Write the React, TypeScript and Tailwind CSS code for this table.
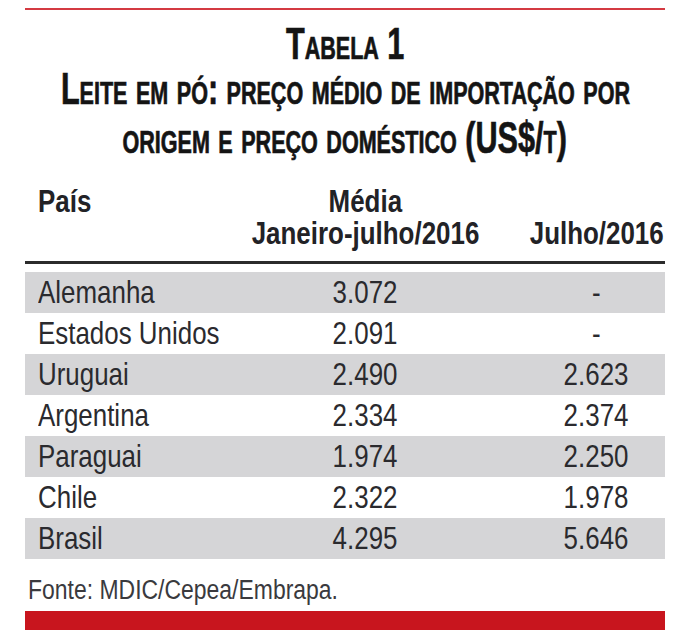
import type { ReactNode } from 'react';

const rows: [string, string, string][] = [
  ['Alemanha', '3.072', '-'],
  ['Estados Unidos', '2.091', '-'],
  ['Uruguai', '2.490', '2.623'],
  ['Argentina', '2.334', '2.374'],
  ['Paraguai', '1.974', '2.250'],
  ['Chile', '2.322', '1.978'],
  ['Brasil', '4.295', '5.646'],
];

// No narrow face is installed, so the condensed look comes from squeezing
// Liberation Sans horizontally.
function Squeeze({ children, left = false }: { children: ReactNode; left?: boolean }) {
  return (
    <span
      className={`inline-block scale-x-[0.81] whitespace-nowrap ${left ? 'origin-left' : 'origin-center'}`}
    >
      {children}
    </span>
  );
}

function TitleLine({ children, className = '' }: { children: ReactNode; className?: string }) {
  return (
    <div className={`flex justify-center leading-[45px] ${className}`}>
      <span className="inline-block scale-x-[0.695] whitespace-nowrap">{children}</span>
    </div>
  );
}

export default function App() {
  return (
    <div className="h-[643px] w-[690px] overflow-hidden bg-white px-[25px] pt-[8px] font-['Liberation_Sans',Arial,sans-serif]">
      <div className="h-[2px] bg-[#d43a42]" />

      {/* title, set in heavy condensed small caps */}
      <div className="mt-[11px] text-[44px] font-bold text-[#141414] [-webkit-text-stroke:0.7px_#141414] [font-variant:small-caps]">
        <TitleLine>Tabela 1</TitleLine>
        <TitleLine>Leite em pó: preço médio de importação por</TitleLine>
        <TitleLine className="mt-[4px]">origem e preço doméstico (US$/t)</TitleLine>
      </div>

      <div className="mt-[25px] text-[32px] text-[#2a2a2e]">
        <div className="grid grid-cols-[224px_232px_minmax(0,1fr)] font-bold leading-[32px] text-[#222226]">
          <div className="min-w-0 pl-[13px]">
            <Squeeze left>País</Squeeze>
          </div>
          <div className="flex min-w-0 flex-col items-center">
            <Squeeze>Média</Squeeze>
            <Squeeze>Janeiro-julho/2016</Squeeze>
          </div>
          <div className="flex min-w-0 items-end justify-center pl-[47px]">
            <Squeeze>Julho/2016</Squeeze>
          </div>
        </div>
        <div className="mt-[12px] h-[3px] bg-[#2b2b2b]" />

        <div className="mt-[8px]">
          {rows.map(([pais, media, julho], i) => (
            <div
              key={pais}
              className={`grid h-[41px] grid-cols-[224px_232px_minmax(0,1fr)] leading-[41px] ${
                i % 2 === 0 ? 'bg-[#d5d5d7]' : ''
              }`}
            >
              <div className="min-w-0 pl-[13px]">
                <Squeeze left>{pais}</Squeeze>
              </div>
              <div className="flex min-w-0 justify-center">
                <Squeeze>{media}</Squeeze>
              </div>
              <div className="flex min-w-0 justify-center pl-[47px]">
                <Squeeze>{julho}</Squeeze>
              </div>
            </div>
          ))}
        </div>

        <div className="mt-[18px] pl-[3px] text-[27px] leading-[27px] text-[#3a3a3e]">
          <span className="inline-block origin-left scale-x-[0.85] whitespace-nowrap">
            Fonte: MDIC/Cepea/Embrapa.
          </span>
        </div>
      </div>

      <div className="mt-[7px] h-[19px] bg-[#c8151e]" />
    </div>
  );
}
